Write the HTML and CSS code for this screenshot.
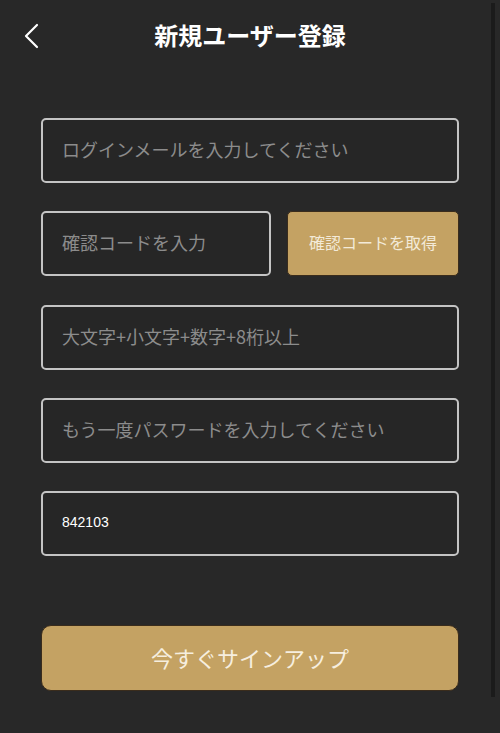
FILE: index.html
```html
<!DOCTYPE html>
<html lang="ja">
<head>
<meta charset="utf-8">
<link rel="stylesheet" href="styles.css">
</head>
<body>
<div class="page">
  <header class="header">
    <svg class="back" width="16" height="26" viewBox="0 0 16 26"><path d="M13 2 L2 13 L13 24" fill="none" stroke="#ffffff" stroke-width="2.2" stroke-linecap="round" stroke-linejoin="round"/></svg>
    <h1 class="title">新規ユーザー登録</h1>
  </header>
  <main class="form">
    <div class="field"><span class="ph">ログインメールを入力してください</span></div>
    <div class="row">
      <div class="field code"><span class="ph">確認コードを入力</span></div>
      <div class="getcode">確認コードを取得</div>
    </div>
    <div class="field"><span class="ph">大文字+小文字+数字+8桁以上</span></div>
    <div class="field"><span class="ph">もう一度パスワードを入力してください</span></div>
    <div class="field"><span class="val">842103</span></div>
    <div class="submit">今すぐサインアップ</div>
  </main>
  <div class="scrollbar"></div>
</div>
</body>
</html>
```
FILE: styles.css
```css
html, body {
  margin: 0;
  padding: 0;
  background: #282828;
}
body {
  font-family: "Noto Sans CJK JP", "Noto Sans", sans-serif;
  width: 500px;
  height: 733px;
  overflow: hidden;
}
.page {
  position: relative;
  height: 733px;
}
.header {
  position: relative;
  height: 75px;
  box-sizing: border-box;
  padding-bottom: 6px;
  display: flex;
  align-items: center;
  justify-content: center;
}
.back {
  position: absolute;
  left: 24px;
  top: 23px;
}
.title {
  margin: 0;
  font-size: 24px;
  font-weight: 700;
  color: #ffffff;
  line-height: 1;
  letter-spacing: 0;
}
.form {
  padding: 43px 41px 0 41px;
  display: flex;
  flex-direction: column;
  gap: 28.25px;
}
.field {
  box-sizing: border-box;
  height: 65px;
  border: 2px solid #c4c4c4;
  border-radius: 5px;
  background: #262626;
  display: flex;
  align-items: center;
  padding-left: 19px;
  padding-bottom: 3px;
}
.row {
  display: flex;
  gap: 16px;
}
.code {
  width: 230px;
  flex: none;
}
.getcode {
  flex: 1;
  height: 65px;
  box-sizing: border-box;
  background: #c4a263;
  border: 1px solid #3a2c1c;
  border-radius: 5px;
  color: #f3ead8;
  font-size: 16px;
  display: flex;
  align-items: center;
  justify-content: center;
  padding-bottom: 3px;
}
.ph {
  font-size: 18px;
  color: #8c8c8c;
}
.val {
  font-family: "Liberation Sans", Arial, sans-serif;
  font-size: 14px;
  color: #ffffff;
}
.submit {
  margin-top: 41px;
  height: 66px;
  box-sizing: border-box;
  background: #c4a263;
  border: 1px solid #3a2c1c;
  border-radius: 10px;
  color: #f6eedf;
  font-size: 22px;
  display: flex;
  align-items: center;
  justify-content: center;
  padding-bottom: 3px;
}
.scrollbar {
  position: absolute;
  right: 5px;
  top: 3px;
  width: 4px;
  height: 694px;
  background: #1b1b1b;
}
```
